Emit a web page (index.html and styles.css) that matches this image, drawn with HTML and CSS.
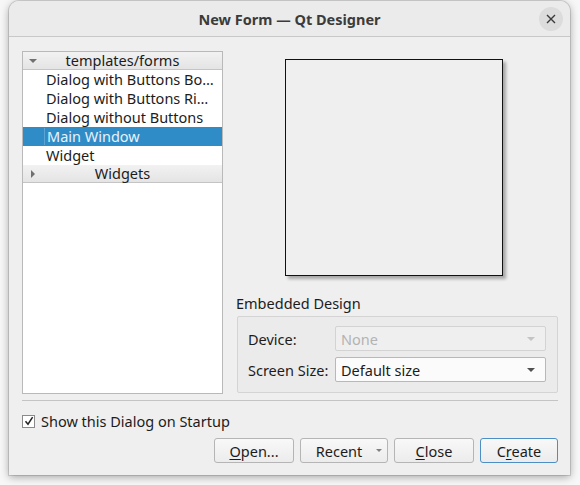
FILE: index.html
```html
<!DOCTYPE html>
<html lang="en">
<head>
    <meta charset="UTF-8">
    <title>New Form — Qt Designer</title>
    <link rel="stylesheet" href="styles.css">
</head>
<body>
    <div class="window">
        <div class="titlebar">
            <span class="title">New Form — Qt Designer</span>
            <span class="close-btn">
                <svg width="10" height="10" viewBox="0 0 10 10"><path d="M1 1L9 9M9 1L1 9" stroke="#3a3a3a" stroke-width="1.4"/></svg>
            </span>
        </div>

        <div class="content">
            <div class="main">
                <div class="tree">
                    <div class="group-head"><span class="arrow down"></span>templates/forms</div>
                    <div class="item">Dialog with Buttons Bo…</div>
                    <div class="item">Dialog with Buttons Ri…</div>
                    <div class="item">Dialog without Buttons</div>
                    <div class="item selected"><span class="focus">Main Window</span></div>
                    <div class="item">Widget</div>
                    <div class="group-head"><span class="arrow right"></span>Widgets</div>
                </div>

                <div class="side">
                    <div class="preview-wrap">
                        <div class="preview"></div>
                    </div>
                    <div class="embedded-title">Embedded Design</div>
                    <div class="group">
                        <div class="form-row">
                            <span class="label">Device:</span>
                            <div class="combo disabled"><span>None</span><span class="caret"></span></div>
                        </div>
                        <div class="form-row">
                            <span class="label">Screen Size:</span>
                            <div class="combo"><span>Default size</span><span class="caret"></span></div>
                        </div>
                    </div>
                </div>
            </div>

            <div class="separator"></div>

            <label class="check">
                <span class="box">
                    <svg width="10" height="10" viewBox="0 0 10 10"><path d="M1.5 5.2L4 8.2L8.6 1.2" fill="none" stroke="#222" stroke-width="1.5"/></svg>
                </span>
                Show this Dialog on Startup
            </label>

            <div class="buttons">
                <button class="btn"><u>O</u>pen...</button>
                <button class="btn menu">Recent<span class="caret small"></span></button>
                <button class="btn"><u>C</u>lose</button>
                <button class="btn default">C<u>r</u>eate</button>
            </div>
        </div>
    </div>
</body>
</html>
```

FILE: styles.css
```css
html, body {
    margin: 0;
    padding: 0;
}

body {
    background: #f7f7f7;
    width: 580px;
    height: 485px;
    font-family: "Noto Sans", "Open Sans", sans-serif;
    font-size: 14.5px;
    color: #1c1c1c;
}

.window {
    margin: 1px 0 0 9px;
    width: 561px;
    height: 474px;
    background: #efefef;
    border-radius: 10px 10px 0 0;
    box-shadow: 0 2px 9px rgba(0, 0, 0, 0.35), 0 0 0 1px rgba(0, 0, 0, 0.12);
    display: flex;
    flex-direction: column;
}

.titlebar {
    height: 35px;
    border-bottom: 1px solid #c8c8c8;
    border-radius: 10px 10px 0 0;
    background: #ebebeb;
    display: flex;
    align-items: center;
    justify-content: center;
    position: relative;
}

.title {
    font-weight: bold;
    font-size: 14.5px;
    color: #3b3b3b;
}

.close-btn {
    position: absolute;
    right: 7px;
    top: 6px;
    width: 24px;
    height: 24px;
    border-radius: 50%;
    background: #dcdcdc;
    display: flex;
    align-items: center;
    justify-content: center;
}

.content {
    padding: 14px 12px 0 13px;
    display: flex;
    flex-direction: column;
}

.main {
    display: flex;
    gap: 13px;
}

/* template tree */
.tree {
    width: 199px;
    height: 341px;
    background: #fff;
    border: 1px solid #b9b9b9;
}

.group-head {
    height: 17px;
    line-height: 17px;
    background: linear-gradient(#f2f2f2, #e4e4e4);
    border-bottom: 1px solid #c4c4c4;
    text-align: center;
    position: relative;
}

.arrow {
    position: absolute;
    left: 6px;
    top: 7px;
    width: 0;
    height: 0;
}

.arrow.down {
    border-left: 4px solid transparent;
    border-right: 4px solid transparent;
    border-top: 4px solid #707070;
}

.arrow.right {
    top: 5px;
    left: 8px;
    border-top: 4px solid transparent;
    border-bottom: 4px solid transparent;
    border-left: 4px solid #707070;
}

.item {
    height: 19px;
    line-height: 19px;
    padding-left: 23px;
    white-space: nowrap;
    overflow: hidden;
}

.item.selected {
    background: #308cc6;
    color: #e8f2fa;
    padding-left: 21px;
}

.focus {
    display: block;
    height: 17px;
    line-height: 17px;
    margin-top: 1px;
    padding-left: 2px;
    border-left: 1px solid #5aa4d6;
}

/* right column */
.side {
    flex: 1;
    display: flex;
    flex-direction: column;
}

.preview-wrap {
    height: 242px;
    padding: 8px 0 0 49px;
    box-sizing: border-box;
}

.preview {
    width: 216px;
    height: 215px;
    border: 1px solid #111;
    background: #efefef;
    box-shadow: 3px 3px 3px rgba(0, 0, 0, 0.3);
}

.embedded-title {
    height: 20px;
    line-height: 20px;
}

.group {
    margin-top: 3px;
    margin-left: 1px;
    height: 77px;
    border: 1px solid #d4d4d4;
    border-radius: 2px;
    background: #ebebeb;
    padding: 9px 11px 0 10px;
    box-sizing: border-box;
    display: flex;
    flex-direction: column;
    gap: 6px;
}

.form-row {
    display: flex;
    align-items: center;
}

.label {
    width: 87px;
}

.combo {
    flex: 1;
    height: 25px;
    box-sizing: border-box;
    border: 1px solid #b8b8b8;
    border-radius: 2px;
    background: #fbfbfb;
    display: flex;
    align-items: center;
    justify-content: space-between;
    padding: 0 10px 0 5px;
}

.combo.disabled {
    color: #b3b3b3;
    background: #efefef;
    border-color: #d3d3d3;
}

.caret {
    width: 0;
    height: 0;
    border-left: 4px solid transparent;
    border-right: 4px solid transparent;
    border-top: 4px solid #505050;
}

.combo.disabled .caret {
    border-top-color: #c4c4c4;
}

.separator {
    margin-top: 6px;
    height: 1px;
    background: #c4c4c4;
    width: 536px;
}

.check {
    display: flex;
    align-items: center;
    gap: 6px;
    margin-top: 12px;
    height: 16px;
}

.box {
    width: 11px;
    height: 11px;
    border: 1px solid #8a8a8a;
    background: #fff;
    display: flex;
    align-items: center;
    justify-content: center;
}

.buttons {
    display: flex;
    justify-content: flex-end;
    gap: 6px;
    margin-top: 9px;
    width: 536px;
}

.btn {
    height: 25px;
    width: 80px;
    font-family: inherit;
    font-size: 14.5px;
    color: #1c1c1c;
    border: 1px solid #b5b5b5;
    border-radius: 3px;
    background: linear-gradient(#f8f8f8, #ececec);
    padding: 0;
}

.btn u {
    text-decoration-thickness: 1px;
    text-underline-offset: 2px;
}

.btn.menu {
    width: 88px;
    position: relative;
    padding-right: 10px;
}

.caret.small {
    position: absolute;
    right: 5px;
    top: 10px;
    border-left-width: 3px;
    border-right-width: 3px;
    border-top: 3px solid #808080;
}

.btn.default {
    width: 78px;
    border-color: #4d8fc4;
}
```
